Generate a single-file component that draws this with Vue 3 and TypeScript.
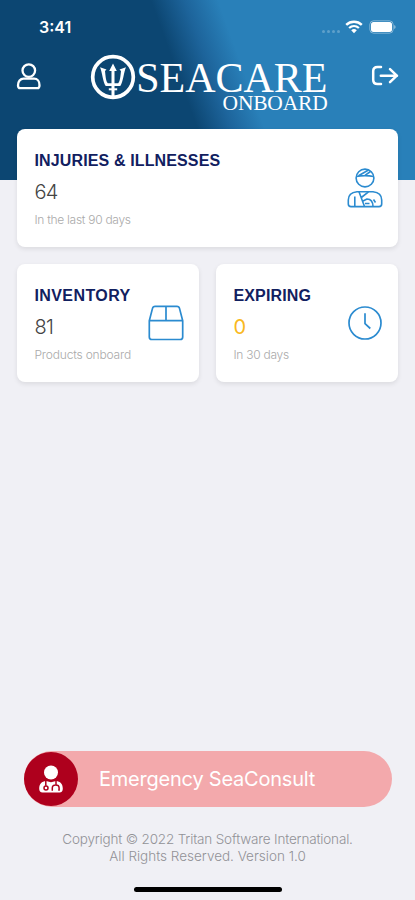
<script setup lang="ts">
interface Stat {
  id: 'injuries' | 'inventory' | 'expiring'
  title: string
  value: number
  caption: string
}

const stats: Stat[] = [
  { id: 'injuries', title: 'INJURIES & ILLNESSES', value: 64, caption: 'In the last 90 days' },
  { id: 'inventory', title: 'INVENTORY', value: 81, caption: 'Products onboard' },
  { id: 'expiring', title: 'EXPIRING', value: 0, caption: 'In 30 days' },
]
</script>

<template>
  <div class="screen">
    <div class="status">
      <span class="time">3:41</span>
      <div class="indicators">
        <span class="dots"><i v-for="n in 4" :key="n"></i></span>
        <svg class="wifi" width="18" height="14" viewBox="0 0 18 14" fill="none" stroke="#fff">
          <path d="M1.2 4.8C5.6.7 12.4.7 16.8 4.8" stroke-width="2.5" />
          <path d="M4.1 8C7 5.4 11 5.4 13.9 8" stroke-width="2.3" />
          <path d="M6.2 10.2Q9 7.9 11.8 10.2L9 13.2Z" fill="#fff" stroke="none" />
        </svg>
        <svg class="battery" width="27" height="14" viewBox="0 0 27 14">
          <rect x=".8" y=".8" width="23.4" height="12.4" rx="3.8" fill="none" stroke="#fff" stroke-opacity=".4" />
          <rect x="2" y="2" width="21" height="10" rx="2.5" fill="#fff" />
          <path d="M25.2 5v4q1.4-.7 1.4-2t-1.4-2Z" fill="#fff" fill-opacity=".5" />
        </svg>
      </div>
    </div>

    <header class="topbar">
      <svg class="user" width="26" height="30" viewBox="0 0 26 30" fill="none" stroke="#fff" stroke-width="2.3">
        <circle cx="12.8" cy="8.6" r="6.3" />
        <path d="M7.5 16.6h10.600c3.200 0 5.400 3 5.400 6.600 0 1.700-.8 3-2.200 3H4.200C2.800 26.200 2 24.900 2 23.200c0-3.600 2.300-6.600 5.500-6.600Z" />
      </svg>
      <div class="brand">
        <svg class="emblem" width="46" height="46" viewBox="0 0 46 46">
          <circle cx="23" cy="23" r="20.3" fill="none" stroke="#fff" stroke-width="3.7" />
          <g fill="#fff">
            <path d="M21.5 42V17h-2.300L23 9.500 26.800 17h-2.300v25Z" />
            <path d="M10 13.200 16.500 15.500 15 17C15.600 22 15.800 27.200 17.800 29.200H28.200C30.200 27.200 30.400 22 31 17L29.500 15.500 36 13.200C33.700 18 33.300 28 30.300 32H15.700C12.700 28 12.300 18 10 13.200Z" />
            <path d="M18.800 34.300h8.400v2h-8.400Z" />
          </g>
        </svg>
        <div class="wordmark">
          <span class="name">SEACARE</span>
          <span class="sub">ONBOARD</span>
        </div>
      </div>
      <svg class="logout" width="28" height="22" viewBox="0 0 28 22" fill="none" stroke="#fff" stroke-width="2.5" stroke-linecap="round" stroke-linejoin="round">
        <path d="M10 1.9H6.500Q2.200 1.900 2.200 6.200V14.800Q2.200 19.100 6.500 19.100H10" />
        <path d="M9.800 10.700H26M19 4.200l6.800 6.500-6.800 6.500" />
      </svg>
    </header>

    <main class="cards">
      <section v-for="stat in stats" :key="stat.id" class="card" :class="stat.id">
        <div class="info">
          <h2>{{ stat.title }}</h2>
          <p class="value">{{ stat.value }}</p>
          <p class="caption">{{ stat.caption }}</p>
        </div>
        <svg v-if="stat.id === 'injuries'" class="icon" width="36" height="40" viewBox="0 0 36 40">
          <circle cx="18" cy="10" r="8.900" />
          <path d="M9.300 8.500Q18 6.800 26.700 8.500M11.500 7.800 21.500 2M18 7.300 23.500 3.500" />
          <path d="M4 38.600Q1.300 38.600 1.300 36V32C1.300 26.500 4.500 24.200 10 23.700H26C31.500 24.200 34.700 26.500 34.700 32V36Q34.700 38.600 32 38.600Z" />
          <path d="M7.800 28.500V38.500M12 23.800 17.500 38.500M14.300 29.500 21.500 23.800M16 33 20 31Q25.800 31 26 38.500M18 35.500h4.500M26.500 31.500 28.500 34.500" />
        </svg>
        <svg v-else-if="stat.id === 'inventory'" class="icon" width="36" height="36" viewBox="0 0 36 36">
          <path d="M1.300 15.700 4.500 3.400Q5 1.300 7.100 1.300H28.900Q31 1.300 31.500 3.400L34.700 15.700V32Q34.700 34.500 32.200 34.500H3.800Q1.300 34.500 1.300 32ZM1.300 15.700H34.700M18 1.300V15.700" />
        </svg>
        <svg v-else class="icon" width="36" height="36" viewBox="0 0 36 36">
          <circle cx="18" cy="18" r="16" />
          <path d="M18 8.300V18.700L23.300 23.500" />
        </svg>
      </section>
    </main>

    <footer class="bottom">
      <button class="emergency" type="button">
        <span class="knob">
          <svg width="26" height="30" viewBox="0 0 26 30">
            <circle cx="13" cy="8.500" r="7" fill="#fff" />
            <path d="M1.200 24.800C1.200 19.800 3.700 17.500 8 17L13 18.300 18 17C22.300 17.500 24.800 19.800 24.800 24.800Q24.800 28.500 21.500 28.500H4.500Q1.200 28.500 1.200 24.800Z" fill="#fff" />
            <g fill="none" stroke="#ae001d" stroke-width="1.500">
              <path d="M7.800 17V21.700M18 17V20.800M15 26H14.300V24Q14.300 20.900 17.700 20.900T21.100 24V26H20.200" />
              <circle cx="8" cy="23.900" r="2" />
            </g>
          </svg>
        </span>
        <span class="label">Emergency SeaConsult</span>
      </button>
      <p class="copyright"><span class="line1">Copyright © 2022 Tritan Software International.</span><span class="line2">All Rights Reserved. Version 1.0</span></p>
      <div class="home"></div>
    </footer>
  </div>
</template>

<style>
body {
  background: #f0f0f5;
}
</style>

<style scoped>
.screen {
  box-sizing: border-box;
  width: 415px;
  height: 900px;
  display: flex;
  flex-direction: column;
  overflow: hidden;
  background: linear-gradient(70deg, #0c4672 45%, #1d649b 52%, #2980b9 59%) 0 0 / 100% 180px no-repeat #f0f0f5;
  font-family: Inter, "Liberation Sans", sans-serif;
}
h2,
p {
  margin: 0;
}
svg {
  display: block;
  flex: none;
}
.status {
  height: 52px;
  box-sizing: border-box;
  padding: 17px 19px 0 39px;
  display: flex;
  justify-content: space-between;
}
.time {
  color: #fff;
  font-size: 16px;
  line-height: 20px;
  font-weight: 600;
}
.indicators {
  display: flex;
  align-items: flex-start;
  padding-top: 3px;
}
.dots {
  display: flex;
  gap: 2px;
  padding-top: 10px;
}
.dots i {
  width: 3px;
  height: 3px;
  border-radius: 50%;
  background: rgba(255, 255, 255, 0.25);
}
.wifi {
  margin-left: 5px;
}
.battery {
  margin-left: 6px;
}
.topbar {
  height: 77px;
  display: flex;
  justify-content: space-between;
  padding: 0 16px;
}
.user {
  margin-top: 10px;
}
.logout {
  margin-top: 13px;
}
.brand {
  display: flex;
  margin-left: 4px;
}
.emblem {
  margin-top: 2px;
}
.wordmark {
  display: flex;
  flex-direction: column;
  align-items: flex-end;
  width: 192px;
  color: #fff;
  font-family: "Liberation Serif", serif;
  white-space: nowrap;
}
.name {
  font-size: 42px;
  line-height: 36px;
  margin-top: 8px;
}
.sub {
  font-size: 21.5px;
  line-height: 14px;
  letter-spacing: -0.2px;
}
.cards {
  display: grid;
  grid-template-columns: 1fr 1fr;
  gap: 17px;
  padding: 0 17px;
}
.card {
  box-sizing: border-box;
  height: 118px;
  padding: 22px 15.5px 0 17.5px;
  display: flex;
  justify-content: space-between;
  background: #fff;
  border-radius: 8px;
  box-shadow: 0 2px 5px rgba(0, 0, 0, 0.09);
}
.injuries {
  grid-column: 1 / -1;
}
.info {
  white-space: nowrap;
}
h2 {
  color: #11205f;
  font: 700 16px/20px "Liberation Sans", sans-serif;
  letter-spacing: 0.13px;
}
.inventory h2 {
  letter-spacing: 0.4px;
}
.value {
  color: #444;
  font-size: 20px;
  line-height: 24px;
  font-weight: 300;
  letter-spacing: -0.8px;
  margin-top: 9px;
}
.expiring .value {
  color: #f9b820;
  font-weight: 400;
}
.caption {
  color: #aaa;
  font-size: 12px;
  line-height: 16px;
  font-weight: 300;
  letter-spacing: -0.28px;
  margin-top: 8px;
}
.inventory .caption {
  letter-spacing: -0.18px;
}
.icon {
  margin-top: 19px;
  fill: none;
  stroke: #2b8bd0;
  stroke-width: 1.7px;
  stroke-linejoin: round;
}
.injuries .icon {
  margin-top: 17px;
  stroke-width: 1.6px;
}
.bottom {
  margin-top: auto;
  height: 149px;
  display: flex;
  flex-direction: column;
  align-items: center;
}
.emergency {
  width: 368px;
  height: 56px;
  margin-left: 1px;
  padding: 0;
  border: 0;
  border-radius: 28px;
  display: flex;
  align-items: center;
  background: #f3a9ac;
}
.knob {
  width: 54px;
  height: 54px;
  border-radius: 50%;
  background: #ae001d;
  display: flex;
  align-items: center;
  justify-content: center;
}
.label {
  margin-left: 21px;
  color: #fff;
  font: 400 20px/24px Inter, "Liberation Sans", sans-serif;
  letter-spacing: -0.22px;
}
.copyright {
  display: flex;
  flex-direction: column;
  align-items: center;
  margin-top: 24px;
  color: #929297;
  font-size: 13.5px;
  line-height: 17px;
  font-weight: 300;
  white-space: nowrap;
}
.line1 {
  letter-spacing: -0.17px;
}
.home {
  width: 148px;
  height: 5px;
  border-radius: 3px;
  margin-top: 22px;
  background: #000;
}
</style>
